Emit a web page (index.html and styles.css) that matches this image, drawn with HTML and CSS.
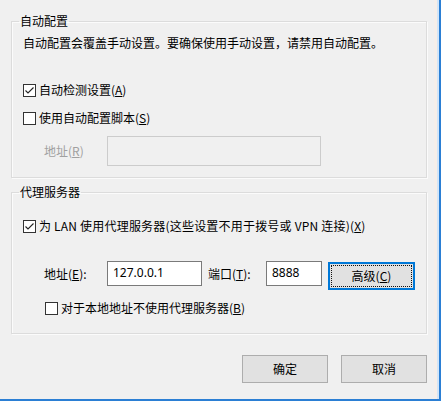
FILE: index.html
```html
<!DOCTYPE html>
<html lang="zh-CN">
<head>
<meta charset="utf-8">
<title>局域网(LAN)设置</title>
<link rel="stylesheet" href="styles.css">
</head>
<body>
<div class="dialog">
  <fieldset class="group group-auto">
    <legend class="group-title">自动配置</legend>
    <div class="group-body">
      <p class="desc">自动配置会覆盖手动设置。要确保使用手动设置，请禁用自动配置。</p>
      <label class="check-row row-detect">
        <span class="cb checked"><svg viewBox="0 0 11 11" width="11" height="11"><path d="M1.5 5.5 L4 8 L9.5 2.5" fill="none" stroke="#222" stroke-width="1.1"/></svg></span>
        <span class="check-text">自动检测设置(<u>A</u>)</span>
      </label>
      <label class="check-row row-script">
        <span class="cb"></span>
        <span class="check-text">使用自动配置脚本(<u>S</u>)</span>
      </label>
      <div class="addr-row">
        <span class="field-label disabled">地址(<u>R</u>)</span>
        <span class="input input-disabled input-script"></span>
      </div>
    </div>
  </fieldset>

  <fieldset class="group group-proxy">
    <legend class="group-title">代理服务器</legend>
    <div class="group-body">
      <label class="check-row row-lan">
        <span class="cb checked"><svg viewBox="0 0 11 11" width="11" height="11"><path d="M1.5 5.5 L4 8 L9.5 2.5" fill="none" stroke="#222" stroke-width="1.1"/></svg></span>
        <span class="check-text lan-text">为 LAN 使用代理服务器(这些设置不用于拨号或 VPN 连接)(<u>X</u>)</span>
      </label>
      <div class="proxy-row">
        <span class="field-label label-addr">地址(<u>E</u>):</span>
        <span class="input input-addr">127.0.0.1</span>
        <span class="field-label label-port">端口(<u>T</u>):</span>
        <span class="input input-port">8888</span>
        <span class="btn btn-focus btn-adv">高级(<u>C</u>)</span>
      </div>
      <label class="check-row row-bypass">
        <span class="cb"></span>
        <span class="check-text">对于本地地址不使用代理服务器(<u>B</u>)</span>
      </label>
    </div>
  </fieldset>

  <div class="footer">
    <span class="btn btn-foot">确定</span>
    <span class="btn btn-foot">取消</span>
  </div>
</div>
</body>
</html>
```

FILE: styles.css
```css
html, body {
  margin: 0;
  padding: 0;
  background: #f0f0f0;
}

body {
  font-family: "Noto Sans CJK SC", "Noto Sans", sans-serif;
  font-size: 12px;
  line-height: 16px;
  color: #000;
}

.dialog {
  width: 441px;
  height: 401px;
  box-sizing: border-box;
  padding: 13px 0 0 11px;
  background: #f0f0f0;
  border-right: 2px solid #2b7fd4;
  border-bottom: 2px solid #2b7fd4;
  box-shadow: inset -2px 0 0 #d2e5f8, inset -5px 0 0 #f6efea;
}

.group {
  margin: 0;
  padding: 0;
  width: 416px;
  box-sizing: border-box;
  border: 1px solid #dcdcdc;
  box-shadow: 1px 1px 0 #fbfbfb, inset 1px 1px 0 #fbfbfb;
  min-inline-size: 0;
}

.group-proxy {
  margin-top: 6px;
}

.group-title {
  margin-left: 7px;
  padding: 0 1px;
  line-height: 16px;
}

.group-body {
  padding: 0 11px;
  display: flex;
  flex-direction: column;
}

.group-auto .group-body {
  padding-bottom: 11px;
}

.group-proxy .group-body {
  padding-bottom: 17px;
}

.desc {
  margin: 6px 0 0;
  height: 16px;
  white-space: nowrap;
}

.check-row {
  display: flex;
  align-items: center;
  height: 16px;
  white-space: nowrap;
}

.row-detect { margin-top: 31px; }
.row-script { margin-top: 12px; }
.row-lan { margin-top: 18px; }
.row-bypass { margin-top: 10px; margin-left: 22px; }

.cb {
  width: 13px;
  height: 13px;
  box-sizing: border-box;
  border: 1px solid #333;
  background: #fff;
  display: flex;
  align-items: center;
  justify-content: center;
  flex: none;
}

.check-text {
  margin-left: 3px;
}

.lan-text {
  letter-spacing: 0.2px;
}

.addr-row {
  margin-top: 10px;
  margin-left: 21px;
  display: flex;
  align-items: center;
  height: 30px;
}

.field-label {
  white-space: nowrap;
  flex: none;
}

.disabled {
  color: #a0a0a0;
}

.addr-row .field-label {
  width: 63px;
}

.input {
  box-sizing: border-box;
  display: flex;
  align-items: center;
  padding: 0 0 2px 5px;
  background: #fff;
  border: 1px solid #7a7a7a;
  font-family: "Noto Sans", "Noto Sans CJK SC", sans-serif;
  font-size: 12px;
  flex: none;
}

.input-disabled {
  background: #f0f0f0;
  border-color: #cccccc;
}

.input-script {
  width: 214px;
  height: 30px;
}

.proxy-row {
  margin-top: 27px;
  margin-left: 21px;
  display: flex;
  align-items: flex-start;
  height: 29px;
}

.proxy-row .field-label {
  line-height: 25px;
}

.label-addr { width: 63px; }
.label-port { width: 58px; margin-left: 6px; }

.input-addr {
  width: 95px;
  height: 25px;
}

.input-port {
  width: 56px;
  height: 25px;
}

.btn {
  box-sizing: border-box;
  display: flex;
  align-items: center;
  justify-content: center;
  background: #e1e1e1;
  border: 1px solid #adadad;
  white-space: nowrap;
  flex: none;
}

.btn-adv {
  width: 87px;
  height: 28px;
  margin-left: 6px;
  margin-top: 1px;
}

.btn-focus {
  border: 2px solid #0078d7;
  outline: 1px dotted #111;
  outline-offset: -4px;
}

.footer {
  margin-top: 21px;
  width: 416px;
  display: flex;
  justify-content: flex-end;
  gap: 13px;
}

.btn-foot {
  width: 86px;
  height: 28px;
}
```
